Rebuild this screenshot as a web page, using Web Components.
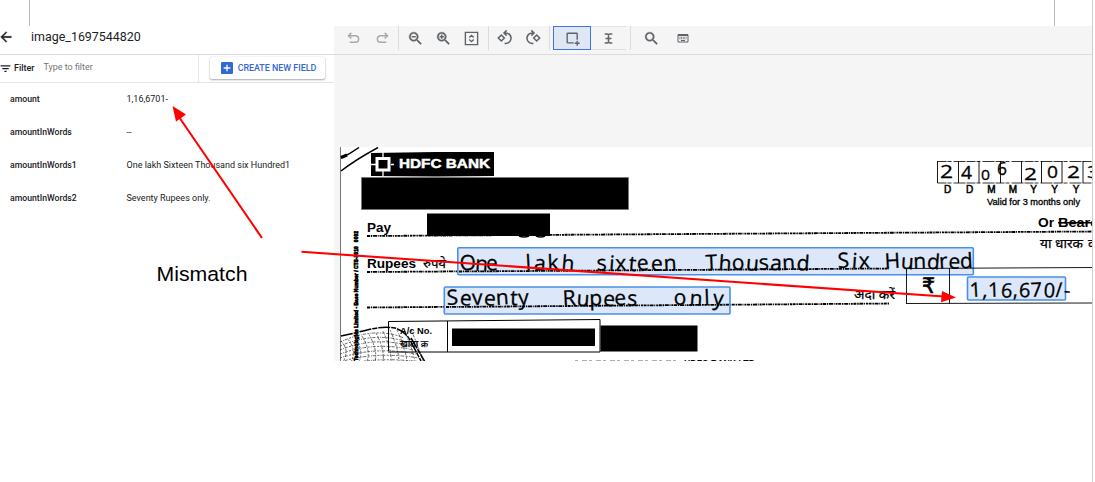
<!DOCTYPE html>
<html lang="en">
<head>
<meta charset="utf-8">
<title>image_1697544820</title>
<style>
html,body{margin:0;height:100%;background:#fff;overflow:hidden}
body{font-family:Roboto,"Liberation Sans",sans-serif}
</style>
</head>
<body>
<review-page></review-page>
<script>
const define=(name,html)=>customElements.define(name,class extends HTMLElement{
  constructor(){
    super();
    this.attachShadow({mode:'open'}).innerHTML=typeof html==='function'?html(this):html;
  }
});

const icons={
  back:'<path stroke="currentColor" stroke-width=".6" d="M20 11H7.83l5.59-5.59L12 4l-8 8 8 8 1.41-1.41L7.83 13H20v-2z"/>',
  filter:'<path d="M10 18.500h4v-2.500h-4v2.500zM3 6v2.500h18V6H3zm3 7.500h12V11H6v2.500z"/>',
  add:'<path d="M19 3H5a2 2 0 0 0-2 2v14c0 1.100.9 2 2 2h14c1.100 0 2-.9 2-2V5c0-1.100-.9-2-2-2zm-2 10h-4v4h-2v-4H7v-2h4V7h2v4h4v2z"/>',
  undo:'<g fill="none" stroke="currentColor" stroke-width="2.400"><path d="M8.500 3L4 7.500 8.500 12M4.500 7.500H15a5.200 5.200 0 0 1 0 10.400H6"/></g>',
  redo:'<g fill="none" stroke="currentColor" stroke-width="2.400"><path d="M15.500 3L20 7.500 15.500 12M19.500 7.500H9a5.200 5.200 0 0 0 0 10.400H18"/></g>',
  search:'<path stroke="currentColor" stroke-width=".6" d="M15.500 14h-.79l-.28-.27A6.471 6.471 0 0 0 16 9.500 6.500 6.500 0 1 0 9.500 16c1.610 0 3.090-.59 4.230-1.570l.27.28v.79l5 4.990L20.490 19l-4.990-5zm-6 0C7.010 14 5 11.990 5 9.500S7.010 5 9.500 5 14 7.010 14 9.500 11.990 14 9.500 14z"/>',
  fit:'<g fill="none" stroke="currentColor" stroke-width="2.200"><path d="M2.200 2.200h19.600v19.600H2.200zM8.500 10.500L12 7l3.500 3.500M8.500 13.500L12 17l3.500-3.500"/></g>',
  left:'<g fill="none" stroke="currentColor" stroke-width="2.300"><path d="M6.500 7.500l4.500 4.500-4.500 4.500L2 12zM11 4.500h2a7.800 7.800 0 1 1-1.500 15.400M14.500 .5L10.500 4.500l4 4"/></g>',
  right:'<g fill="none" stroke="currentColor" stroke-width="2.300"><path d="M17.500 7.500L22 12l-4.500 4.500L13 12zM13 4.500h-2a7.800 7.800 0 1 0 1.500 15.400M9.500 .5l4 4-4 4"/></g>',
  box:'<g fill="none" stroke="currentColor" stroke-width="2.200"><path d="M14 19H4.500a1 1 0 0 1-1-1V4.500a1 1 0 0 1 1-1h14a1 1 0 0 1 1 1V14M19.500 15.500v8M15.500 19.500h8"/></g>',
  text:'<g fill="none" stroke="currentColor" stroke-width="2.800"><path d="M5 3.500h4.500L12 5l2.500-1.500H19M5 20.500h4.500L12 19l2.500 1.500H19M12 4v16M6.500 12h11"/></g>',
  keyboard:'<g fill="none" stroke="currentColor" stroke-width="2"><path d="M2 5h20v15H2zM2 7h20"/><path d="M5 10.500h14M5 13.500h14" stroke-dasharray="2 1.200"/><path d="M8 17h8"/></g>'
};
icons.zoomout=icons.search+'<path d="M6.500 8.500h6v2h-6z"/>';
icons.zoomin=icons.search+'<path d="M6.500 8.500h6v2h-6zM8.500 6.500h2v6h-2z"/>';

define('ui-icon',el=>`<style>:host{display:block;flex:none}svg{display:block;width:100%;height:100%;fill:currentColor}</style>
<svg viewBox="0 0 24 24">${icons[el.getAttribute('name')]}</svg>`);

define('page-margin',`<style>:host{display:flex;justify-content:space-between;height:26px;padding:0 37px 0 29px;box-sizing:border-box}
i{width:1px;background:#bdbdbd}</style><i></i><i></i>`);

define('doc-header',`<style>:host{display:flex;align-items:center;height:29px;padding:0 0 6px;box-sizing:border-box;border-bottom:1px solid #dadce0;gap:17px;color:#202124}
ui-icon{width:16px;height:16px;margin-left:-2px}span{font-size:12.450px;line-height:18px;white-space:nowrap}</style>
<ui-icon name="back"></ui-icon><span><slot></slot></span>`);

define('filter-bar',`<style>:host{display:flex;height:28px;border-bottom:1px solid #e4e4e4;box-sizing:border-box;font-size:9px;color:#202124}
.f{display:flex;align-items:center;width:198px;border-right:1px solid #e4e4e4}
ui-icon{width:13px;height:13px}b{font-weight:500;font-size:9px;margin-left:2px;padding-bottom:1px}
.f ui-icon{margin-left:-1px}
.p{color:#757575;margin-left:9px;padding-bottom:3px;font-size:8.950px}
button{font:500 8.900px Roboto,sans-serif;color:#3367d6;background:#fff;border:0;border-radius:2px;box-shadow:0 1px 2px #0005,0 0 1px #0003;width:115px;height:22px;margin:2px 0 0 11px;padding:0;display:flex;align-items:center;justify-content:center;gap:3px;white-space:nowrap}
button ui-icon{width:16px;height:16px}</style>
<div class="f"><ui-icon name="filter"></ui-icon><b>Filter</b><span class="p">Type to filter</span></div>
<button><ui-icon name="add"></ui-icon><span>CREATE NEW FIELD</span></button>`);

define('field-row',el=>`<style>:host{display:grid;grid-template-columns:116.500px 1fr;align-items:center;height:33.200px;padding-left:10px;font-size:9px;color:#202124;white-space:nowrap}
b{font-weight:500;font-size:8.700px}</style><b>${el.getAttribute('name')}</b><span><slot></slot></span>`);

define('field-panel',`<style>:host{display:block;background:#fff}.rows{margin-top:-.7px}</style>
<doc-header>image_1697544820</doc-header><filter-bar></filter-bar><div class="rows">
<field-row name="amount">1,16,6701-</field-row>
<field-row name="amountInWords">--</field-row>
<field-row name="amountInWords1">One lakh Sixteen Thousand six Hundred1</field-row>
<field-row name="amountInWords2">Seventy Rupees only.</field-row></div>`);

define('tool-cell',el=>{
  const s=el.getAttribute('size')||16;
  return `<style>:host{display:flex;align-items:center;justify-content:center;box-sizing:border-box;height:24px;width:${el.getAttribute('w')}px;color:#5f6368}
  :host([off]){color:#a8aaad}:host([on]){background:#dfe6f4;border:1px solid #3b78e7}:host([framed]){border:solid #e0e0e0;border-width:1px 0}
  ui-icon{width:${s}px;height:${s}px}</style><ui-icon name="${el.getAttribute('icon')}"></ui-icon>`;
});

define('tool-bar',`<style>:host{display:flex;height:29px;box-sizing:border-box;border-bottom:1px solid #dadce0;padding-left:6px;background:#f5f5f5}
i{width:1px;height:24px;background:#dcdcdc}.a{margin-left:4px}.b{margin-right:3px}</style>
<tool-cell icon="undo" w="27" size="15" off></tool-cell><tool-cell icon="redo" w="31" size="15" off></tool-cell><i></i>
<tool-cell icon="zoomout" w="32" size="17"></tool-cell><tool-cell icon="zoomin" w="24" size="17"></tool-cell><tool-cell icon="fit" w="33" size="15"></tool-cell><i></i>
<tool-cell icon="left" w="31"></tool-cell><tool-cell icon="right" w="25"></tool-cell><i class="a b"></i>
<tool-cell icon="box" w="38" size="15" on></tool-cell><tool-cell icon="text" w="35" size="13" framed></tool-cell><i class="a"></i>
<tool-cell icon="search" w="40" size="17"></tool-cell><tool-cell icon="keyboard" w="24" size="12"></tool-cell>`);

/* Scanned cheque, drawn in page coordinates: the viewBox starts at its corner. */
const t=(x,y,w,size,text,extra='')=>`<text x="${x}" y="${y}" textLength="${w}" lengthAdjust="spacingAndGlyphs" font-size="${size}" ${extra}>${text}</text>`;
/* Pen writing: every letter keeps its width, wobbles a little, and the word fills its span. */
const pen=(x,y,w,size,text)=>`<text x="${x}" y="${y}" textLength="${w}" lengthAdjust="spacing" font-size="${size}" rotate="${[...text].map((c,i)=>[-3,4,-2,5,-4,2][i%6]).join(' ')}">${text}</text>`;
const dots=(x1,y1,x2,y2)=>`<path d="M${x1} ${y1}L${x2} ${y2}" stroke-width="1.800" stroke-dasharray="3 .8 1.500 .7 4 .7 1 .9 2 .6"/>`;
const bold='font-weight="700"';
define('cheque-scan',()=>{
  let mesh='';
  for(let i=0;i<11;i++){
    mesh+=`<path d="M${341+i*7} ${341-Math.min(i,7)*1.600}Q${350+i*7} 350 ${343+i*8} 362"/>`;
    if(i<7)mesh+=`<path d="M340 ${342+i*4}Q375 ${326+i*5} ${404+i*3} ${338+i*4}"/>`;
  }
  return `<style>:host{display:block;height:214px}svg{display:block;width:752px;height:214px;background:#fff}
  .hand{font-family:"Open Sans","Noto Sans",sans-serif;font-weight:400;stroke:#000;stroke-width:.3}
  .hi{font-family:"Noto Sans","Noto Sans Devanagari",sans-serif;stroke:#000;stroke-width:.25}</style>
<svg viewBox="340 147 752 214" font-family="Liberation Sans,sans-serif">
<g fill="none" stroke="#000">
<path d="M340.500 147v214" stroke="#777"/>
<path d="M341 158q9-4 18-10.500M341 171q14-11 37-23.500" stroke-width="1.500"/><path d="M341 157.500l6-2.500" stroke-width="3"/>
</g>
<path d="M371 153l65-1h58v24l-58 .5-65-.5z"/>
<g fill="none" stroke="#fff"><path d="M377 158.500h12v11.500h-12z" stroke-width="3"/><path d="M383 152v6m0 13v5M371 164.500h5m15 0h3" stroke-width="1.300"/></g>
${t(399,168,91,13.500,'HDFC BANK','font-weight="700" fill="#fff" stroke="#fff" stroke-width=".5"')}
<path d="M361.500 177.500h267v32h-267z" stroke="#777" stroke-width=".8"/>
${t(367,231.500,24,13,'Pay',bold)}
<g fill="none" stroke="#000">${dots(367,236,1092,231.500)}${dots(367,272,889,268.500)}${dots(367,307.500,889,303.500)}</g>
<path d="M427 213.500h123v22.500h-123z"/>
<path d="M519 236q5 2 10 0M536 236q5 2 9 0" fill="none" stroke="#000" stroke-width="1.500"/>
<g fill="#dce8fa" stroke="#4a90e8" stroke-width="1.600">
<rect x="457.800" y="247.700" width="515.500" height="27" rx="1"/><rect x="444.300" y="287" width="285.700" height="27" rx="1"/><rect x="967.500" y="277" width="98" height="23" rx="1"/></g>
<g fill="none" stroke="#000">${dots(459,271.500,889,268.500)}${dots(446,307,729,304.700)}</g>
${t(367,267.500,49,12.500,'Rupees',bold)}
${t(423,268,23,12,'रुपये','class="hi"')}
<g class="hand">
${pen(460,270.500,38,21,'One')}${pen(526,270,48,21,'lakh')}${pen(597,270.500,80,21,'sixteen')}${pen(706,270,103,21,'Thousand')}${pen(838,268,32,21,'Six')}${pen(885,268.500,88,21,'Hundred')}
${pen(447,305,82,21,'Seventy')}${pen(563,305.500,74,21,'Rupees')}${pen(674,305,49,21,'only')}
${pen(970,297,100,20,'1,16,670/-')}
${t(940,178,13,18,'2')}${t(961,179,11,18,'4')}${t(981,180,9,15,'0')}${t(997,175,10,18,'6')}${t(1024,179.500,13,17,'2')}${t(1047,178,11,17,'0')}${t(1067,178,13,17,'2')}${t(1087,178,12,17,'3')}
</g>
<g fill="none" stroke="#000" stroke-width="1"><path d="M937.500 161.500h155M937.500 183h155" stroke-dasharray="9 1 4 2 12 1" stroke-width=".8"/>
<path d="M937.500 161v22M958.500 161v22M979 161v22M1000.500 161v22M1021.500 161v22M1041.500 161v22M1062 161v22M1083 161v22" stroke-width=".9"/></g>
<g font-size="10" text-anchor="middle" stroke="#000" stroke-width=".5"><text x="947.500" y="193">D</text><text x="969.500" y="193">D</text><text x="991.500" y="193">M</text><text x="1013" y="193">M</text><text x="1033.500" y="193">Y</text><text x="1054.500" y="193">Y</text><text x="1076" y="193">Y</text></g>
${t(987,205,93,8.500,'Valid for 3 months only','stroke="#000" stroke-width=".3"')}
${t(1038,227,16,12.500,'Or',bold)}${t(1058,227,46,12.500,'Bearer',bold)}
<path d="M1058 222.700h34" stroke="#000" stroke-width="1.500"/>
${t(1040,248,43,13,'या धारक','class="hi"')}${t(1088,248,14,13,'को','class="hi"')}
${t(854,298.500,41,12,'अदा करें','class="hi"')}
<g fill="none" stroke="#000" stroke-width=".9"><path d="M906.500 268v35.500M949.500 268v35.500M906 268.500l186-1M906 303.500l186-.5"/></g>
<text x="922" y="293" font-size="21" font-family="DejaVu Sans,sans-serif" stroke="#000" stroke-width=".7" textLength="13" lengthAdjust="spacingAndGlyphs">₹</text>
<g fill="none" stroke="#222" stroke-width=".7" stroke-dasharray="2 1.200 1 .8 3 1.500">${mesh}</g>
<path d="M341 336q14-3 28-6.500t26-1.500q10 3 15 12l11 21M411 338l14 24" fill="none" stroke="#000" stroke-width="1.500" stroke-dasharray="12 1 5 1"/>
<path d="M388.500 351V321.500L600 319.500V352H388M447.500 321v31" fill="none" stroke="#000" stroke-width="1"/>
<path d="M452 328.500h143v17.500H452z"/><path d="M600.500 325.500h97v26h-97z"/>
${t(400,334,32,9.500,'A/c No.',bold)}
${t(400,346.500,28,9,'खाता क्र','class="hi"')}
<text transform="translate(357.500 361) rotate(-90)" font-size="6" font-weight="700" textLength="130" lengthAdjust="spacingAndGlyphs" stroke="#000" stroke-width=".7">Technologies Limited - Base Number / CTS-2010 &#160; 0002</text>
${t(684,366,71,8.500,'HDFC BANK LTD',bold)}
<path d="M575 360.700h105" stroke="#555" stroke-width=".6" stroke-dasharray="3 4 5 2"/>
</svg>`;
});

define('scan-viewer',`<style>:host{display:flex;flex-direction:column;background:#f5f5f5;overflow:hidden}
.stage{padding:92px 0 0 6px}</style><tool-bar></tool-bar><div class="stage"><cheque-scan></cheque-scan></div>`);

define('review-notes',`<style>:host{position:absolute;inset:0;pointer-events:none}svg{display:block;width:1095px;height:482px}</style>
<svg viewBox="0 0 1095 482"><g stroke="#f00" stroke-width="2.100"><path d="M262 238L179 117M301.500 251.800L944 296.500"/></g>
<path d="M172.500 106l13.500 8.500-10 7zM956 297.500l-15 4.800 1-11.300z" fill="#f00"/>
<text x="156.500" y="281" font-family="Liberation Sans,sans-serif" font-size="20.500" textLength="91" lengthAdjust="spacingAndGlyphs">Mismatch</text></svg>`);

define('review-page',`<style>:host{display:block;position:relative;width:1093px;height:482px;box-sizing:border-box;border-right:1px solid #ccc;background:#fff;overflow:hidden}
main{display:grid;grid-template-columns:334px 1fr;height:335px}</style>
<page-margin></page-margin><main><field-panel></field-panel><scan-viewer></scan-viewer></main><review-notes></review-notes>`);
</script>
</body>
</html>
